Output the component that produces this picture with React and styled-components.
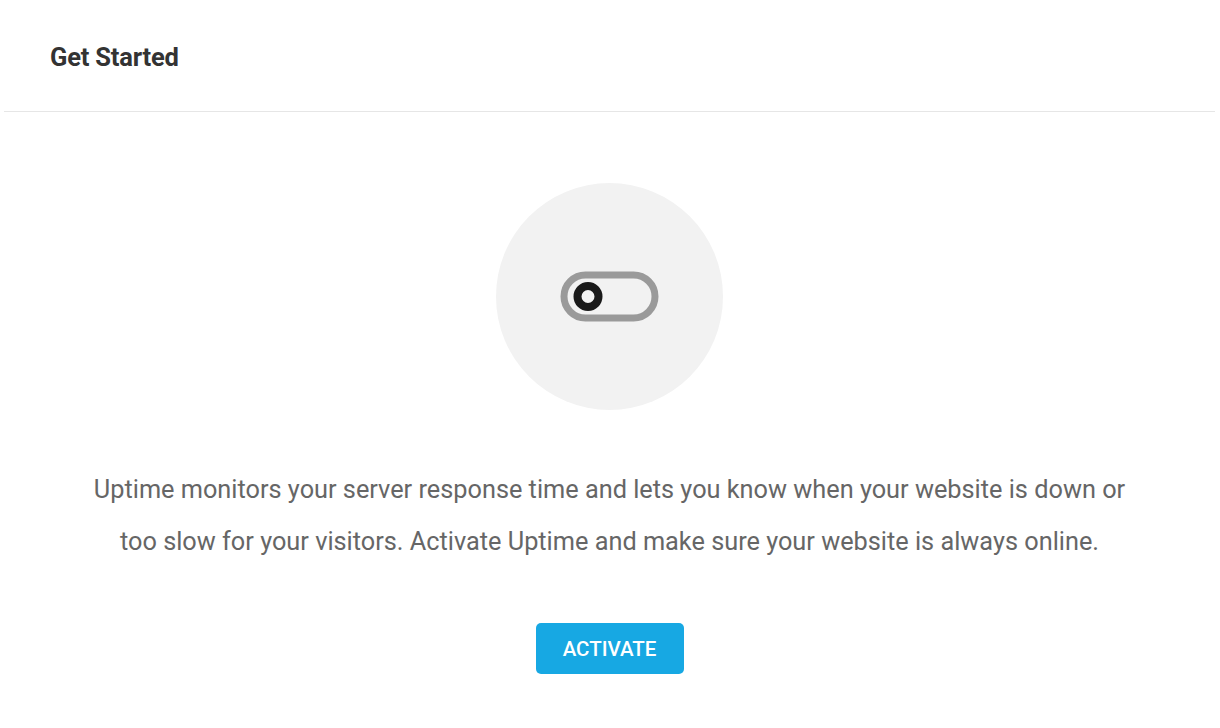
import styled, {createGlobalStyle} from 'styled-components';

const GlobalStyle = createGlobalStyle`
  body {
    margin: 0;
    background: #fff;
    font-family: Roboto, "Liberation Sans", sans-serif;
  }
`;

const Card = styled.div`
  margin: 0 5px 0 4px;
  background: #fff;
`;

const Header = styled.div`
  height: 112px;
  box-sizing: border-box;
  display: flex;
  align-items: center;
  padding: 3px 0 0 46px;
  border-bottom: 1px solid #e6e6e6;
`;

const Title = styled.h2`
  margin: 0;
  font-size: 25.5px;
  font-weight: 700;
  color: #333;
  letter-spacing: -0.2px;
`;

const Body = styled.div`
  display: flex;
  flex-direction: column;
  align-items: center;
  padding: 71px 0 54px;
`;

const Illustration = styled.div`
  width: 227px;
  height: 227px;
  border-radius: 50%;
  background: #f2f2f2;
  display: flex;
  align-items: center;
  justify-content: center;
`;

const Text = styled.p`
  margin: 54px 0 0;
  max-width: 1045px;
  text-align: center;
  font-size: 25.3px;
  line-height: 52px;
  color: #666;
`;

const Button = styled.button`
  margin-top: 55px;
  width: 148px;
  height: 51px;
  border: none;
  border-radius: 5px;
  background: #17a8e3;
  color: #fff;
  font-family: Roboto, "Liberation Sans", sans-serif;
  font-size: 20.5px;
  font-weight: 500;
  cursor: pointer;
`;

const ToggleIcon = () => (
  <svg width="100" height="52" viewBox="0 0 100 52">
    <rect x="4" y="4" width="91" height="43" rx="21.5" fill="none" stroke="#9a9a9a" strokeWidth="7" />
    <circle cx="28" cy="25.5" r="10.5" fill="none" stroke="#1a1a1a" strokeWidth="8" />
  </svg>
);

export default function App() {
  return (
    <Card>
      <GlobalStyle />
      <Header>
        <Title>Get Started</Title>
      </Header>
      <Body>
        <Illustration>
          <ToggleIcon />
        </Illustration>
        <Text>
          Uptime monitors your server response time and lets you know when your website is down or
          too slow for your visitors. Activate Uptime and make sure your website is always online.
        </Text>
        <Button type="button">ACTIVATE</Button>
      </Body>
    </Card>
  );
}
